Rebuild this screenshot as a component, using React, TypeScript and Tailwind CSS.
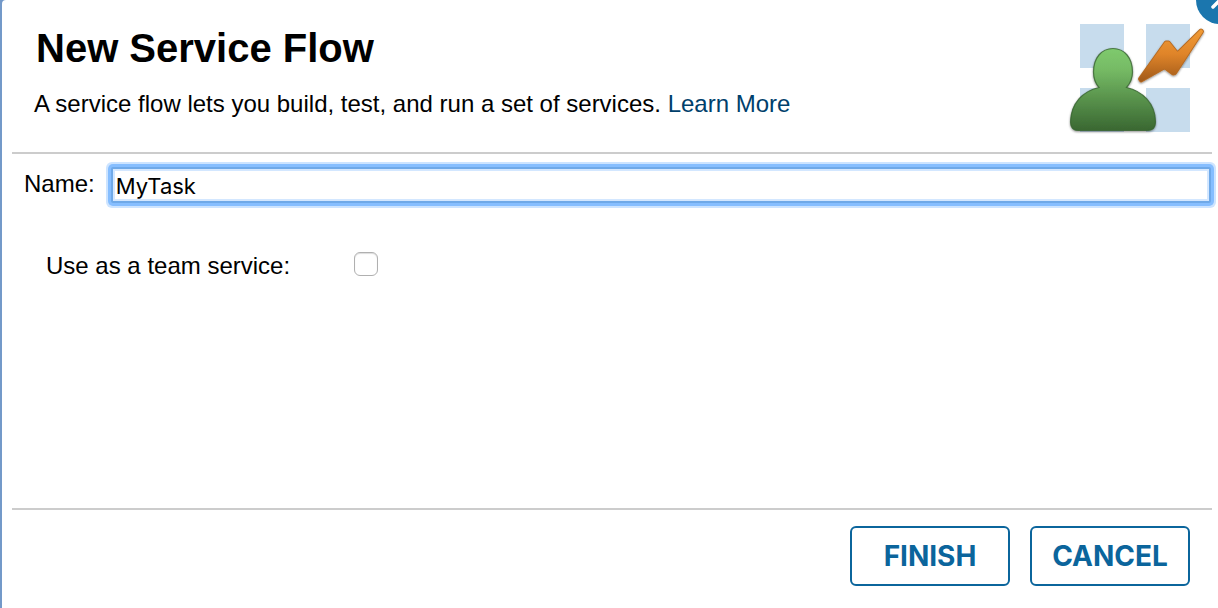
import { useState } from "react";

function ServiceFlowIcon() {
  return (
    <svg width="140" height="116" viewBox="0 0 140 116" role="img" aria-label="Service flow">
      <defs>
        <linearGradient id="person" x1="0" y1="26" x2="0" y2="110" gradientUnits="userSpaceOnUse">
          <stop offset="0" stopColor="#7fca6e" />
          <stop offset="0.25" stopColor="#76bb65" />
          <stop offset="1" stopColor="#386530" />
        </linearGradient>
        <linearGradient id="bolt" x1="0" y1="8" x2="0" y2="62" gradientUnits="userSpaceOnUse">
          <stop offset="0" stopColor="#f09a35" />
          <stop offset="0.45" stopColor="#df8429" />
          <stop offset="1" stopColor="#9b5618" />
        </linearGradient>
        <filter id="soft" x="-10%" y="-10%" width="120%" height="125%">
          <feDropShadow dx="0" dy="1" stdDeviation="1" floodColor="#000" floodOpacity="0.45" />
        </filter>
      </defs>
      <g fill="#c7dced">
        <rect x="12" y="2" width="44" height="44" />
        <rect x="78" y="2" width="44" height="44" />
        <rect x="12" y="66" width="44" height="44" />
        <rect x="78" y="66" width="44" height="44" />
      </g>
      <path
        d="M31 65.500C26.500 60.500 25.500 55.500 25.500 50C25.500 36 33.500 26.500 45 26.500C56.500 26.500 64.500 36 64.500 50C64.500 55.500 63 60.500 58.500 65.500C74 69 87.500 81 87.500 100C87.500 106 84.500 108.500 79 108.500H11C5.500 108.500 2.500 106 2.500 100C3 81 15 69 31 65.500Z"
        fill="url(#person)"
        stroke="#386431"
        strokeOpacity="0.8"
        strokeWidth="1.2"
        filter="url(#soft)"
      />
      <g strokeLinejoin="round">
        <path
          d="M134 9.500L107 51L105 51.500L97 45.500L95 46L73 58.500L72 57L98 20.500L100.500 20.500L108.500 30.500L110.500 30.500L133 8.500Z"
          fill="#b56a22"
          stroke="#b56a22"
          strokeWidth="4"
          filter="url(#soft)"
        />
        <path
          d="M134 9.500L107 51L105 51.500L97 45.500L95 46L73 58.500L72 57L98 20.500L100.500 20.500L108.500 30.500L110.500 30.500L133 8.500Z"
          fill="url(#bolt)"
          stroke="url(#bolt)"
          strokeWidth="2.200"
        />
      </g>
    </svg>
  );
}

export default function App() {
  const [name, setName] = useState("MyTask");
  const [team, setTeam] = useState(false);

  return (
    <div className="relative min-h-screen overflow-hidden bg-[#7399c9] pl-0.5 font-['Liberation_Sans',Arial,sans-serif] text-2xl text-black">
      <form className="flex min-h-screen flex-col rounded-tl bg-white pr-1.5 pl-2.5" onSubmit={(e) => e.preventDefault()}>
        <header className="flex items-start justify-between border-b-2 border-[#cccccc] pt-5.5 pr-1 pb-3.5">
          <div className="pl-6">
            <h1 className="text-[40px] leading-[52px] font-bold">New Service Flow</h1>
            <p className="-ml-0.5 pt-4 leading-7">
              A service flow lets you build, test, and run a set of services.{" "}
              <a href="#learn-more" className="text-[#00406b]">Learn More</a>
            </p>
          </div>
          <ServiceFlowIcon />
        </header>

        <main className="grow">
          <div className="flex items-center pt-[13px] pr-px pl-3">
            <label htmlFor="flow-name" className="pb-0.5 leading-7">Name:</label>
            <input
              id="flow-name"
              type="text"
              value={name}
              onChange={(e) => setName(e.target.value)}
              className="ml-4 h-9 min-w-0 grow rounded-[2px] border-2 border-[#6fa9e8] bg-white px-[3px] pt-0.5 font-[Inter,sans-serif] text-[22px] leading-7 shadow-[inset_0_0_0_2px_#d3e7ff,0_0_0_3px_#86beff,0_0_0_5px_#cde4ff] outline-none"
            />
          </div>
          <div className="flex items-center pt-[45px] pl-8.5">
            <label htmlFor="team-service" className="w-77 pt-1 leading-7">Use as a team service:</label>
            <input
              id="team-service"
              type="checkbox"
              checked={team}
              onChange={(e) => setTeam(e.target.checked)}
              className="size-6 appearance-none rounded-md border border-[#b0b0b0] bg-white shadow-[inset_0_1px_1px_#dddddd] checked:bg-[#0b659c]"
            />
          </div>
        </main>

        <footer className="flex justify-end gap-5 border-t-2 border-[#cccccc] pt-4 pr-5.5 pb-5.5 font-[Inter,sans-serif] text-[28px] font-bold text-[#0b659c]">
          <button type="submit" className="h-15 w-40 rounded-md border-2 border-[#0b659c] pt-0.5">FINISH</button>
          <button type="button" className="h-15 w-40 rounded-md border-2 border-[#0b659c] pt-0.5">CANCEL</button>
        </footer>
      </form>

      <button type="button" aria-label="Close" className="absolute -top-6 -right-6.5 size-12 rounded-full bg-[#1b76ae]">
        <svg viewBox="0 0 48 48" className="size-12" stroke="white" strokeWidth="3.500" strokeLinecap="round">
          <path d="M17 31L31 17M17 17L31 31" />
        </svg>
      </button>
    </div>
  );
}
